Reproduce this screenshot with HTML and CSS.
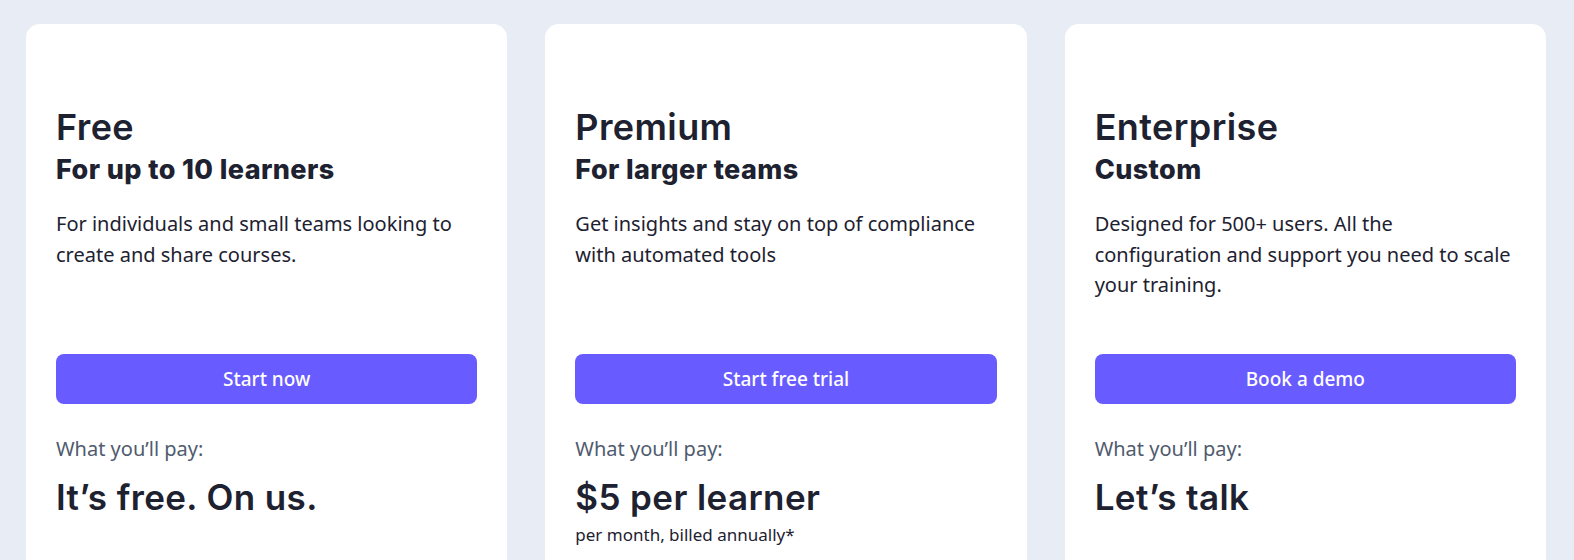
FILE: index.html
```html
<!DOCTYPE html>
<html>
<head>
<meta charset="utf-8">
<title>Pricing</title>
<link rel="stylesheet" href="styles.css">
</head>
<body>
<div class="plans">
  <div class="plan">
    <div class="plan-top">
      <h2 class="plan-name">Free</h2>
      <h3 class="plan-for">For up to 10 learners</h3>
      <p class="plan-desc">For individuals and small teams looking to create and share courses.</p>
    </div>
    <a class="plan-btn" href="#">Start now</a>
    <p class="pay-label">What you’ll pay:</p>
    <p class="pay-price">It’s free. On us.</p>
  </div>
  <div class="plan">
    <div class="plan-top">
      <h2 class="plan-name">Premium</h2>
      <h3 class="plan-for">For larger teams</h3>
      <p class="plan-desc">Get insights and stay on top of compliance with automated tools</p>
    </div>
    <a class="plan-btn" href="#">Start free trial</a>
    <p class="pay-label">What you’ll pay:</p>
    <p class="pay-price">$5 per learner</p>
    <p class="pay-note">per month, billed annually*</p>
  </div>
  <div class="plan">
    <div class="plan-top">
      <h2 class="plan-name">Enterprise</h2>
      <h3 class="plan-for">Custom</h3>
      <p class="plan-desc">Designed for 500+ users. All the configuration and support you need to scale your training.</p>
    </div>
    <a class="plan-btn" href="#">Book a demo</a>
    <p class="pay-label">What you’ll pay:</p>
    <p class="pay-price">Let’s talk</p>
  </div>
</div>
</body>
</html>
```

FILE: styles.css
```css
body {
  margin: 0;
  padding: 24px 28px 0 26px;
  background: #e8ecf5;
  font-family: "Noto Sans", "Open Sans", sans-serif;
  color: #1d2130;
}

/* Three cards side by side */
.plans {
  display: grid;
  grid-template-columns: 1fr 1fr 1fr;
  gap: 38px;
}
.plan {
  background: white;
  border-radius: 14px;
  padding: 0 30px 40px;
  min-height: 560px;
}

/* Title and description; fixed height so the buttons line up */
.plan-top {
  height: 330px;
  padding-top: 81px;
  box-sizing: border-box;
}
.plan-name {
  margin: 0;
  font-family: Inter, sans-serif;
  font-weight: 600;
  font-size: 36px;
  line-height: 44px;
  letter-spacing: 0.4px;
}
.plan-for {
  margin: 3px 0 0;
  font-family: Inter, sans-serif;
  font-weight: 800;
  font-size: 27px;
  line-height: 36px;
  letter-spacing: 0.4px;
}
.plan-desc {
  margin: 21px 0 0;
  font-size: 20px;
  line-height: 30.5px;
}

.plan-btn {
  display: block;
  height: 50px;
  line-height: 50px;
  border-radius: 8px;
  background: #685bff;
  color: white;
  text-align: center;
  text-decoration: none;
  font-size: 19px;
  font-weight: 500;
}

.pay-label {
  margin: 30px 0 0;
  font-size: 20px;
  line-height: 30px;
  color: #4f5b6e;
}
.pay-price {
  margin: 11px 0 0;
  font-family: Inter, sans-serif;
  font-weight: 600;
  font-size: 35px;
  line-height: 44px;
  letter-spacing: 0.4px;
}
.pay-note {
  margin: 4px 0 0;
  font-size: 17px;
  line-height: 24px;
}
```
